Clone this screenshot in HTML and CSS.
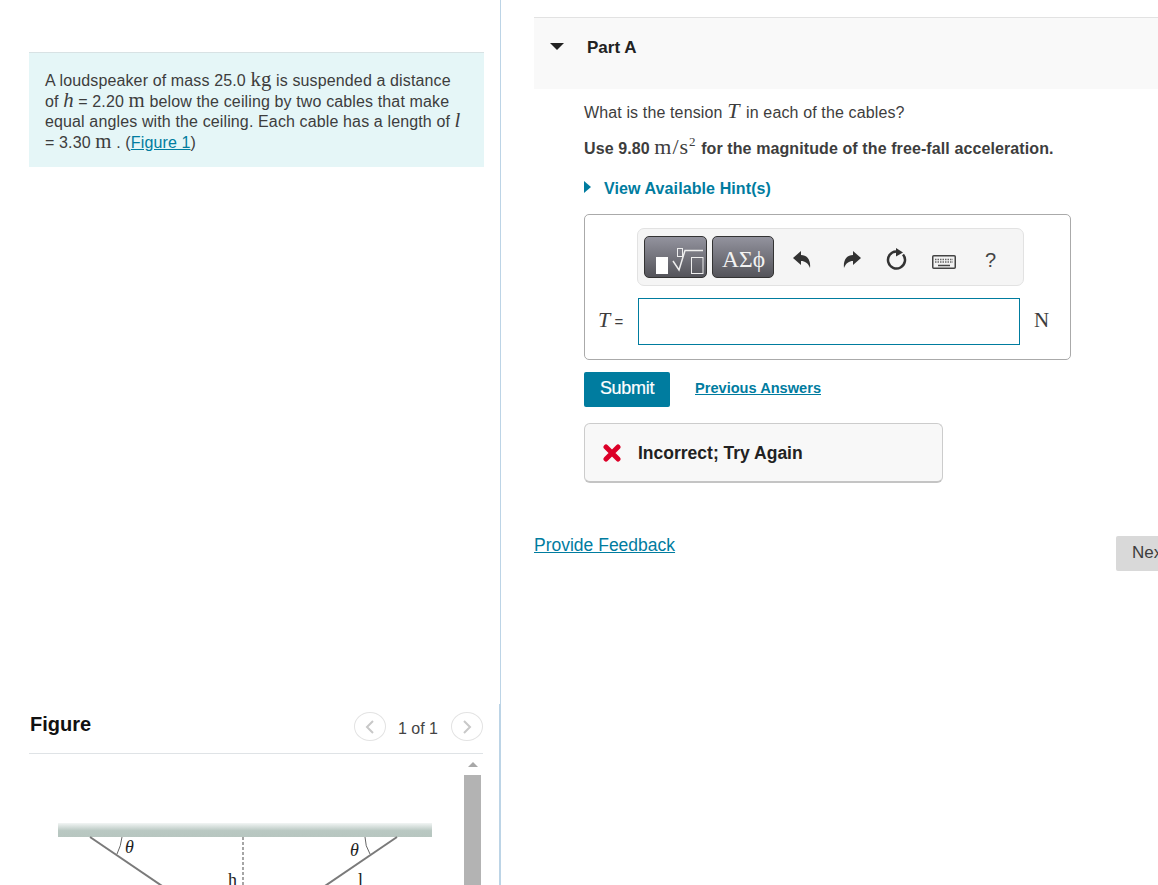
FILE: index.html
```html
<html>
<head>
    <meta charset="utf-8" />
    <title>Part A</title>
    <link rel="stylesheet" href="styles.css">
</head>
<body>
    <div class="page">
        <div class="left">
            <div class="problem">
                A loudspeaker of mass 25.0 <span class="math">kg</span> is suspended a distance<br>
                of <span class="math var">h</span> = 2.20 <span class="math">m</span> below the ceiling by two cables that make<br>
                equal angles with the ceiling. Each cable has a length of <span class="math var">l</span><br>
                = 3.30 <span class="math">m</span> . (<a href="#">Figure 1</a>)
            </div>
            <div class="figure-block">
                <div class="figure-head">
                    <span class="figure-title">Figure</span>
                    <div class="pager">
                        <span class="page-btn">
                            <svg width="10" height="14" viewBox="0 0 10 14"><path d="M8 1 L2 7 L8 13" /></svg>
                        </span>
                        <span class="page-count">1 of 1</span>
                        <span class="page-btn">
                            <svg width="10" height="14" viewBox="0 0 10 14"><path d="M2 1 L8 7 L2 13" /></svg>
                        </span>
                    </div>
                </div>
                <div class="figure-pane">
                    <svg class="figure-art" width="435" height="131" viewBox="0 0 435 131">
                        <defs>
                            <linearGradient id="ceil" x1="0" y1="0" x2="0" y2="1">
                                <stop offset="0" stop-color="#f2f5f4" />
                                <stop offset="0.55" stop-color="#b9c8c2" />
                                <stop offset="1" stop-color="#b7c6c0" />
                            </linearGradient>
                        </defs>
                        <rect x="29" y="69" width="374" height="14" fill="url(#ceil)" />
                        <path class="cable" d="M61 83 L139 136" />
                        <path class="cable" d="M368 83 L290 136" />
                        <path class="dash" d="M214 83 V131" />
                        <path class="arc" d="M93 83 Q92 92 88 100" />
                        <path class="arc" d="M336 83 Q336 92 341 100" />
                        <text class="fig-label it" x="96" y="99">θ</text>
                        <text class="fig-label it" x="321" y="102">θ</text>
                        <text class="fig-label" x="199" y="132">h</text>
                        <text class="fig-label" x="329" y="132">l</text>
                    </svg>
                    <div class="scrollbar">
                        <span class="scroll-up"></span>
                        <span class="scroll-thumb"></span>
                    </div>
                </div>
            </div>
        </div>
        <div class="right">
            <div class="part-head">
                <span class="caret-down"></span>
                <span class="part-title">Part A</span>
            </div>
            <div class="part-body">
                <p class="question">What is the tension <span class="math var big">T</span> in each of the cables?</p>
                <p class="note">Use 9.80 <span class="math plain">m/s<sup>2</sup></span> for the magnitude of the free-fall acceleration.</p>
                <div class="hint"><span class="caret-right"></span><a href="#">View Available Hint(s)</a></div>
                <div class="answer-box">
                    <div class="toolbar">
                        <span class="tool-btn tool-templates">
                            <svg width="61" height="40" viewBox="1 1 61 40">
                                <rect x="12" y="21" width="12" height="17" fill="#fff" />
                                <rect x="33.5" y="12.5" width="5" height="8" class="line" />
                                <path class="line thick" d="M29 25 L35 34 L41 14.5 H59" />
                                <rect x="47.5" y="21.5" width="11.5" height="16" class="line" />
                            </svg>
                        </span>
                        <span class="tool-btn tool-symbols">ΑΣϕ</span>
                        <span class="tool-icons">
                            <svg class="undo" width="18" height="18" viewBox="0 0 18 18"><path class="solid" d="M0 7 L8 0 V4 C14 4 18 9 17 17 C15 12 12 10 8 10 V14 Z" /></svg>
                            <svg width="18" height="18" viewBox="0 0 18 18"><path class="solid" d="M18 7 L10 0 V4 C4 4 0 9 1 17 C3 12 6 10 10 10 V14 Z" /></svg>
                            <svg width="22" height="24" viewBox="0 0 22 24"><path class="ring" d="M10 3.5 A8.5 8.5 0 1 0 17 6.5" /><path class="solid" d="M10 0 L17 4.5 L10 8.5 Z" /></svg>
                            <svg class="keyboard" width="24" height="14" viewBox="0 0 24 14">
                                <rect x="0.75" y="0.75" width="22.5" height="12.5" rx="1" fill="#f2f2f2" stroke="#444" stroke-width="1.5" />
                                <path d="M3 4.5 H21 M3 7 H21" stroke="#666" stroke-width="1.5" stroke-dasharray="1.5 1" />
                                <path d="M6 10.5 H18" stroke="#444" stroke-width="1.5" />
                            </svg>
                            <span class="tool-help">?</span>
                        </span>
                    </div>
                    <div class="answer-row">
                        <label class="answer-label"><span class="math var big">T</span> =</label>
                        <input class="answer-input" type="text" />
                        <span class="math unit">N</span>
                    </div>
                </div>
                <div class="submit-row">
                    <span class="submit">Submit</span>
                    <a class="prev" href="#">Previous Answers</a>
                </div>
                <div class="feedback">
                    <svg width="18" height="18" viewBox="0 0 18 18"><path d="M3 3 L15 15 M15 3 L3 15" /></svg>
                    <span>Incorrect; Try Again</span>
                </div>
            </div>
            <div class="bottom-row">
                <a class="provide" href="#">Provide Feedback</a>
                <span class="next">Next</span>
            </div>
        </div>
    </div>
</body>
</html>
```

FILE: styles.css
```css
html, body {
    margin: 0;
    height: 100%;
    overflow: hidden;
    background: #fff;
}
body {
    font-family: "Liberation Sans", Arial, sans-serif;
    color: #3d3d3d;
}
a {
    color: #007c9f;
}
.page {
    display: flex;
    flex-direction: row;
    height: 885px;
    overflow: hidden;
}
.math {
    font-family: "Liberation Serif", serif;
    font-size: 1.3em;
    line-height: 0;
}
.var {
    font-style: italic;
}
.left {
    box-sizing: border-box;
    width: 501px;
    flex: none;
    border-right: 1px solid #bcd4e6;
    padding: 52px 0 0 29px;
    display: flex;
    flex-direction: column;
}
.problem {
    box-sizing: border-box;
    height: 115px;
    margin-right: 16px;
    background: #e5f6f7;
    border-top: 1px solid #d8e2e4;
    padding: 18px 0 0 16px;
    font-size: 16px;
    line-height: 20.6px;
    letter-spacing: 0.13px;
}
.figure-block {
    flex: 1;
    display: flex;
    flex-direction: column;
    min-height: 0;
    margin-top: 537px;
    padding-right: 16px;
    border-right: 1px solid #bcd4e6;
}
.figure-head {
    box-sizing: border-box;
    display: flex;
    flex-direction: row;
    justify-content: space-between;
    align-items: flex-start;
    height: 50px;
    border-bottom: 1px solid #dfe3e6;
}
.figure-title {
    font-size: 20px;
    line-height: 23px;
    font-weight: bold;
    color: #111;
    margin: 9px 0 0 1px;
}
.pager {
    display: flex;
    align-items: center;
    margin-top: 8px;
}
.page-btn {
    box-sizing: border-box;
    width: 32px;
    height: 29px;
    border: 1px solid #e3e3e3;
    border-radius: 50%;
    display: flex;
    align-items: center;
    justify-content: center;
}
.page-btn path {
    fill: none;
    stroke: #c8c8c8;
    stroke-width: 2;
}
.page-count {
    font-size: 16px;
    color: #444;
    margin: 5px 13px 0 12px;
}
.figure-pane {
    display: flex;
    flex-direction: row;
    flex: 1;
    overflow: hidden;
    justify-content: space-between;
}
.figure-art {
    display: block;
}
.cable {
    stroke: #7a7a7a;
    stroke-width: 2;
    fill: none;
}
.dash {
    stroke: #888;
    stroke-width: 1.5;
    stroke-dasharray: 3 2;
    fill: none;
}
.arc {
    stroke: #666;
    stroke-width: 1;
    fill: none;
}
.fig-label {
    font-family: "Liberation Serif", serif;
    font-size: 18px;
    fill: #222;
}
.it {
    font-style: italic;
}
.scrollbar {
    width: 17px;
    margin-right: 2px;
    display: flex;
    flex-direction: column;
    align-items: center;
}
.scroll-up {
    margin-top: 8px;
    width: 0;
    height: 0;
    border-left: 5px solid transparent;
    border-right: 5px solid transparent;
    border-bottom: 5px solid #a8a8a8;
}
.scroll-thumb {
    margin-top: 8px;
    width: 17px;
    flex: 1;
    background: #b3b3b3;
}
.right {
    flex: none;
    width: 657px;
    padding: 17px 0 0 33px;
    box-sizing: border-box;
}
.part-head {
    box-sizing: border-box;
    height: 72px;
    background: #f9f9f9;
    border-top: 1px solid #e2e2e2;
    padding-top: 20px;
    display: flex;
    align-items: flex-start;
}
.caret-down {
    width: 0;
    height: 0;
    margin: 5px 0 0 16px;
    border-left: 7px solid transparent;
    border-right: 7px solid transparent;
    border-top: 7px solid #222;
}
.part-title {
    font-size: 17px;
    line-height: 20px;
    font-weight: bold;
    color: #222;
    margin-left: 23px;
}
.part-body {
    padding: 0 0 0 50px;
    width: 487px;
}
.question {
    margin: 14px 0 0 0;
    font-size: 16px;
    line-height: 20px;
    letter-spacing: 0.13px;
}
.question .big {
    margin-right: 2px;
}
.note {
    margin: 15px 0 0 0;
    font-size: 16px;
    line-height: 22px;
    font-weight: bold;
    letter-spacing: 0.1px;
    white-space: nowrap;
}
.big {
    font-size: 22px;
}
.plain {
    font-weight: normal;
    font-size: 22px;
    letter-spacing: 1px;
}
.plain sup {
    font-size: 13px;
    line-height: 0;
}
.hint {
    margin-top: 20px;
    display: flex;
    align-items: center;
    font-size: 16px;
    font-weight: bold;
    letter-spacing: 0.1px;
}
.hint a {
    text-decoration: none;
}
.caret-right {
    width: 0;
    height: 0;
    margin-right: 13px;
    margin-top: -4px;
    border-top: 6px solid transparent;
    border-bottom: 6px solid transparent;
    border-left: 7px solid #007c9f;
}
.answer-box {
    box-sizing: border-box;
    width: 487px;
    height: 146px;
    margin-top: 16px;
    border: 1px solid #aaa;
    border-radius: 5px;
    padding: 13px 0 0 13px;
}
.toolbar {
    box-sizing: border-box;
    width: 387px;
    height: 58px;
    margin-left: 39px;
    padding: 7px 0 0 6px;
    background: #f5f5f5;
    border: 1px solid #e2e2e2;
    border-radius: 7px;
    display: flex;
    flex-direction: row;
    align-items: flex-start;
}
.tool-btn {
    box-sizing: border-box;
    height: 42px;
    border: 1px solid #333;
    border-radius: 5px;
    background: linear-gradient(#93939e, #54545a);
    display: flex;
    align-items: center;
    justify-content: center;
    color: #f2f2f2;
}
.tool-templates {
    width: 63px;
}
.tool-symbols {
    width: 62px;
    margin-left: 5px;
    padding: 4px 0 0 1px;
    font-family: "Liberation Serif", serif;
    font-size: 23.5px;
}
.line {
    fill: none;
    stroke: #eee;
    stroke-width: 1;
}
.thick {
    stroke-width: 1.5;
}
.tool-icons {
    display: flex;
    align-items: center;
    height: 42px;
    margin: 3px 0 0 19px;
    gap: 25px;
}
.undo {
    margin-right: 7px;
}
.keyboard {
    margin: 4px 1px 0 -1px;
}
.tool-icons .solid {
    fill: #333;
}
.ring {
    fill: none;
    stroke: #333;
    stroke-width: 2.5;
}
.tool-help {
    font-size: 20px;
    color: #444;
    margin-left: 3px;
}
.answer-row {
    display: flex;
    flex-direction: row;
    align-items: center;
    margin-top: 12px;
}
.answer-label {
    width: 40px;
    font-size: 15px;
}
.answer-input {
    box-sizing: border-box;
    width: 382px;
    height: 47px;
    border: 1px solid #007c9f;
    border-radius: 0;
    outline: none;
    margin: 0;
    padding: 0;
}
.unit {
    margin: -3px 0 0 14px;
    font-size: 21px;
}
.submit-row {
    display: flex;
    align-items: center;
    margin-top: 12px;
}
.submit {
    box-sizing: border-box;
    width: 86px;
    height: 35px;
    background: #007c9f;
    color: #fff;
    border-radius: 2px;
    font-size: 18px;
    line-height: 33px;
    text-align: center;
    letter-spacing: -0.3px;
    -webkit-text-stroke: 0.2px #fff;
}
.prev {
    margin: -4px 0 0 25px;
    font-size: 14.6px;
    font-weight: bold;
}
.feedback {
    box-sizing: border-box;
    width: 359px;
    height: 60px;
    margin-top: 16px;
    background: #f8f8f8;
    border: 1px solid #ccc;
    border-bottom: 2px solid #c4c4c4;
    border-radius: 6px;
    display: flex;
    align-items: center;
    padding-left: 18px;
    font-size: 17.5px;
    font-weight: bold;
    color: #222;
}
.feedback span {
    margin-top: 1px;
}
.feedback svg {
    margin-right: 17px;
}
.feedback path {
    stroke: #dc0028;
    stroke-width: 5;
    stroke-linecap: round;
    fill: none;
}
.bottom-row {
    display: flex;
    flex-direction: row;
    justify-content: space-between;
    align-items: flex-start;
    width: 652px;
    margin-top: 52px;
}
.provide {
    font-size: 17.5px;
}
.next {
    box-sizing: border-box;
    width: 70px;
    height: 35px;
    margin-top: 1px;
    padding-left: 16px;
    background: #d9d9d9;
    border-radius: 2px;
    font-size: 17px;
    line-height: 33px;
}
```
